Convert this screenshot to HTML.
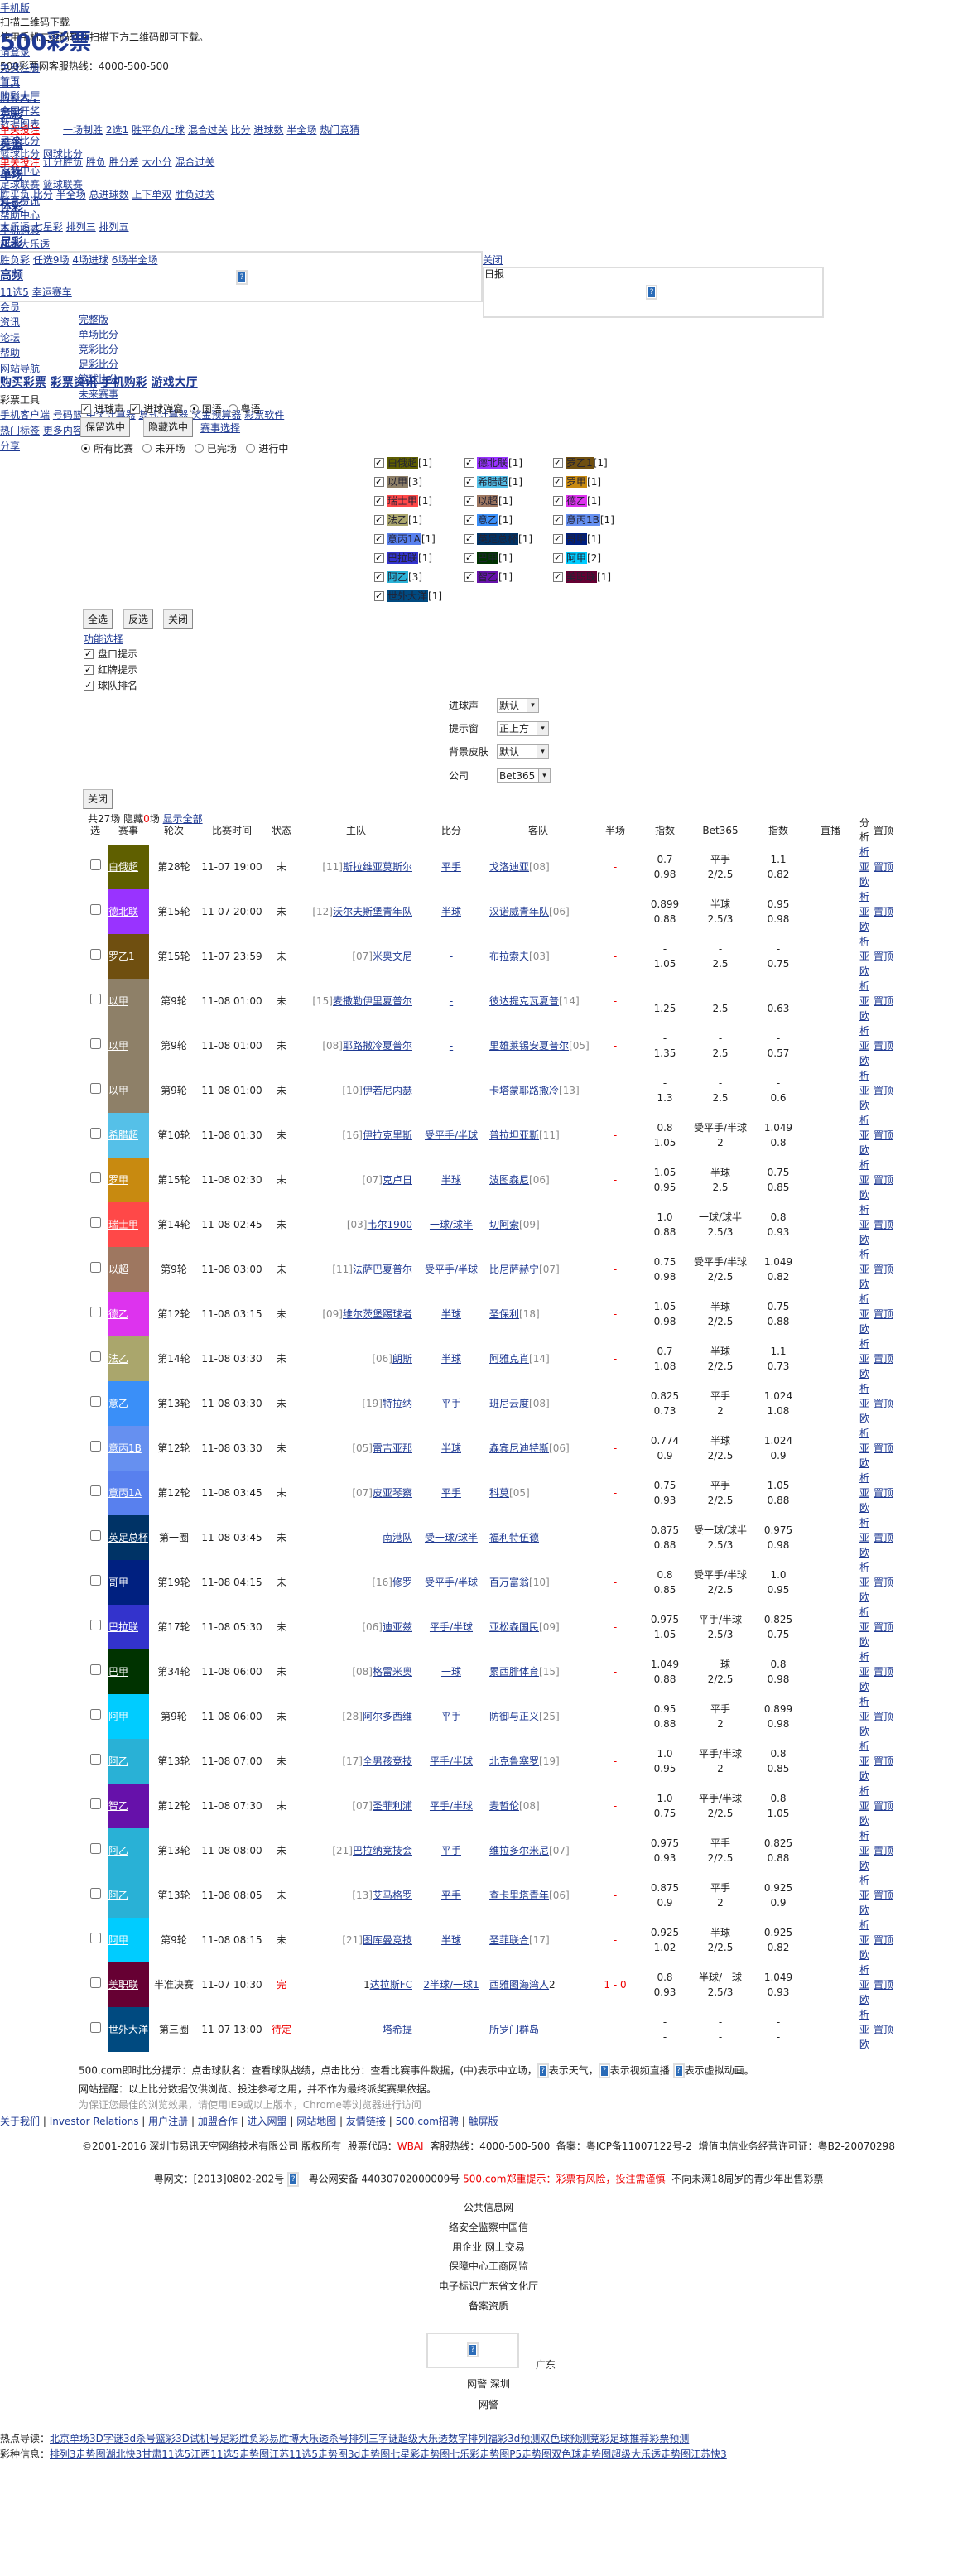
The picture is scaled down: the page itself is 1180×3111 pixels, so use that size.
<!DOCTYPE html>
<html><head><meta charset="utf-8">
<style>
*{box-sizing:border-box}
body{margin:0;width:1180px;height:3111px;position:relative;background:#fff;font:12px/16px "DejaVu Sans","Noto Sans CJK SC",sans-serif;color:#222;overflow:hidden}
a{color:#1f3a93;text-decoration:underline}
.a{position:absolute;white-space:nowrap;line-height:16px}
.red{color:#e00}
.b{font-weight:bold;font-size:14px}
.q{display:inline-block;width:14px;height:18px;border:2px solid #ddd;background:#fff;vertical-align:middle;position:relative}
.q:after{content:"?";position:absolute;left:1px;top:1px;width:8px;height:12px;background:#2b6cb8;color:#fff;font-size:9px;line-height:12px;text-align:center}
.btn{position:absolute;background:#efefef;border:1px solid #bbb;border-right-color:#888;border-bottom-color:#888;font-size:12px;line-height:22px;text-align:center;height:24px}
.sel{position:absolute;height:18px;border:1px solid #aaa;background:#fff;font-size:12px;line-height:16px;padding-left:2px}
.sel:after{content:"▾";position:absolute;right:0;top:0;width:13px;height:16px;background:#eee;border-left:1px solid #aaa;font-size:9px;text-align:center}
.cb{position:absolute;width:12px;height:12px;border:1px solid #777;background:#fff}
.cb.k:after{content:"✓";position:absolute;left:0;top:-3px;font-size:11px;color:#000;font-weight:bold}
.rd{display:inline-block;width:11px;height:11px;border:1px solid #888;border-radius:50%;vertical-align:-1px;margin-right:4px;position:relative}
.rd.k:after{content:"";position:absolute;left:3px;top:3px;width:3px;height:3px;border-radius:50%;background:#000}
.lg{padding:0 1px;color:#223}
table.m{position:absolute;left:100px;top:986px;border-collapse:collapse;table-layout:fixed;width:982px}
table.m tr{height:54px}
table.m td{padding:0;height:54px;text-align:center;white-space:nowrap;line-height:18px;vertical-align:middle;overflow:visible}
table.m tr.h{height:34px}
table.m tr.h td{height:34px}
table.m td:nth-child(14) a,table.m td:nth-child(14) span{display:block;height:18px;line-height:18px}
table.m tr.h td:nth-child(14) span{height:17px;line-height:17px}
table.m td.l{text-align:left;color:#fff;padding-left:1px}
table.m td.l a{color:#fff}
table.m td.r{text-align:right;padding-right:2px}
table.m td.g{text-align:left;padding-left:1px}
.k8{color:#888}
.ms{color:#e00}
</style></head><body>

<a class="a" style="left:0;top:2px">手机版</a>
<div class="a" style="left:0;top:19px">扫描二维码下载</div>
<div class="a" style="left:0;top:37px">使用手机二维码软件扫描下方二维码即可下载。</div>
<a class="a" style="left:0;top:36px;font-size:27px;line-height:32px;font-weight:bold;text-decoration:none">500彩票</a>
<a class="a" style="left:0;top:55px">请登录</a>
<div class="a" style="left:0;top:72px">500彩票网客服热线：4000-500-500</div>
<a class="a" style="left:0;top:74px">免费注册</a>
<a class="a" style="left:0;top:90px">首页</a><a class="a" style="left:0;top:92px">首页</a>
<a class="a" style="left:0;top:108px">购彩大厅</a><a class="a" style="left:0;top:110px">购彩大厅</a>
<a class="a" style="left:0;top:126px">全国开奖</a><a class="a b" style="left:0;top:130px">竞彩</a>
<a class="a" style="left:0;top:142px">数据图表</a>
<a class="a red" style="left:0;top:149px;color:#e00">单关投注</a>
<div class="a" style="left:76px;top:149px"><a>一场制胜</a> <a>2选1</a> <a>胜平负/让球</a> <a>混合过关</a> <a>比分</a> <a>进球数</a> <a>半全场</a> <a>热门竞猜</a></div>
<a class="a" style="left:0;top:162px">足球比分</a><a class="a b" style="left:0;top:167px">竞篮</a>
<div class="a" style="left:0;top:178px"><a>篮球比分</a> <a>网球比分</a></div>
<a class="a" style="left:0;top:188px;color:#e00">单关投注</a>
<div class="a" style="left:52px;top:188px"><a>让分胜负</a> <a>胜负</a> <a>胜分差</a> <a>大小分</a> <a>混合过关</a></div>
<a class="a" style="left:0;top:198px">指数中心</a><a class="a b" style="left:0;top:204px">单场</a>
<div class="a" style="left:0;top:215px"><a>足球联赛</a> <a>篮球联赛</a></div>
<div class="a" style="left:0;top:227px"><a>胜平负</a> <a>比分</a> <a>半全场</a> <a>总进球数</a> <a>上下单双</a> <a>胜负过关</a></div>
<a class="a" style="left:0;top:235px">彩票资讯</a><a class="a b" style="left:0;top:242px">体彩</a>
<a class="a" style="left:0;top:252px">帮助中心</a>
<div class="a" style="left:0;top:266px"><a>大乐透</a> <a>七星彩</a> <a>排列三</a> <a>排列五</a></div>
<a class="a" style="left:0;top:270px">手机购彩</a>
<a class="a" style="left:0;top:287px">超级大乐透</a><a class="a b" style="left:0;top:285px">足彩</a>

<div style="position:absolute;left:0;top:303px;width:583px;height:62px;border:2px solid #ddd;border-left:0"></div>
<div class="a" style="left:0;top:306px"><a>胜负彩</a> <a>任选9场</a> <a>4场进球</a> <a>6场半全场</a></div>
<a class="a b" style="left:0;top:325px">高频</a>
<span class="q" style="position:absolute;left:285px;top:326px"></span>
<div class="a" style="left:0;top:345px"><a>11选5</a> <a>幸运赛车</a></div>
<a class="a" style="left:583px;top:306px">关闭</a>
<div style="position:absolute;left:583px;top:322px;width:412px;height:62px;border:2px solid #ddd"></div>
<div class="a" style="left:585px;top:323px">日报</div>
<span class="q" style="position:absolute;left:780px;top:344px"></span>

<a class="a" style="left:0;top:363px">会员</a>
<a class="a" style="left:0;top:381px">资讯</a><a class="a" style="left:95px;top:378px">完整版</a>
<a class="a" style="left:0;top:400px">论坛</a><a class="a" style="left:95px;top:396px">单场比分</a>
<a class="a" style="left:0;top:418px">帮助</a><a class="a" style="left:95px;top:414px">竞彩比分</a>
<a class="a" style="left:0;top:437px">网站导航</a><a class="a" style="left:95px;top:432px">足彩比分</a>
<a class="a" style="left:95px;top:450px">篮球比分</a>
<div class="a b" style="left:0;top:454px"><a>购买彩票</a> <a>彩票资讯</a> <a>手机购彩</a> <a>游戏大厅</a></div>
<a class="a" style="left:95px;top:468px">未来赛事</a>
<div class="a" style="left:0;top:475px">彩票工具</div>
<div class="a" style="left:0;top:493px"><a>手机客户端</a> <a>号码篮</a> <a>中奖计算器</a> <a>复式计算器</a> <a>奖金预算器</a> <a>彩票软件</a></div>
<div class="a" style="left:98px;top:486px"><span class="cb k" style="position:relative;display:inline-block;vertical-align:-2px"></span> 进球声 &nbsp;<span class="cb k" style="position:relative;display:inline-block;vertical-align:-2px"></span> 进球弹窗 &nbsp;<span class="rd k"></span>国语 &nbsp;<span class="rd"></span>粤语</div>
<div class="a" style="left:0;top:512px"><a>热门标签</a> <a>更多内容</a></div>
<div class="btn" style="left:97px;top:504px;width:60px">保留选中</div>
<div class="btn" style="left:173px;top:504px;width:60px">隐藏选中</div>
<a class="a" style="left:242px;top:509px">赛事选择</a>
<a class="a" style="left:0;top:531px">分享</a>
<div class="a" style="left:98px;top:534px"><span class="rd k"></span>所有比赛 &nbsp; <span class="rd"></span>未开场 &nbsp; <span class="rd"></span>已完场 &nbsp; <span class="rd"></span>进行中</div>

<div style="position:absolute;left:0;top:0">
<span class="cb k" style="left:452px;top:553px"></span><div class="a" style="left:467px;top:551px"><span class="lg" style="background:#5f5f00">白俄超</span>[1]</div>
<span class="cb k" style="left:561px;top:553px"></span><div class="a" style="left:576px;top:551px"><span class="lg" style="background:#9933ff">德北联</span>[1]</div>
<span class="cb k" style="left:668px;top:553px"></span><div class="a" style="left:683px;top:551px"><span class="lg" style="background:#6f4f10">罗乙1</span>[1]</div>
<span class="cb k" style="left:452px;top:576px"></span><div class="a" style="left:467px;top:574px"><span class="lg" style="background:#8e8068">以甲</span>[3]</div>
<span class="cb k" style="left:561px;top:576px"></span><div class="a" style="left:576px;top:574px"><span class="lg" style="background:#55c0e8">希腊超</span>[1]</div>
<span class="cb k" style="left:668px;top:576px"></span><div class="a" style="left:683px;top:574px"><span class="lg" style="background:#c88a10">罗甲</span>[1]</div>
<span class="cb k" style="left:452px;top:599px"></span><div class="a" style="left:467px;top:597px"><span class="lg" style="background:#ff4848">瑞士甲</span>[1]</div>
<span class="cb k" style="left:561px;top:599px"></span><div class="a" style="left:576px;top:597px"><span class="lg" style="background:#9e7760">以超</span>[1]</div>
<span class="cb k" style="left:668px;top:599px"></span><div class="a" style="left:683px;top:597px"><span class="lg" style="background:#dd33ee">德乙</span>[1]</div>
<span class="cb k" style="left:452px;top:622px"></span><div class="a" style="left:467px;top:620px"><span class="lg" style="background:#aaa66c">法乙</span>[1]</div>
<span class="cb k" style="left:561px;top:622px"></span><div class="a" style="left:576px;top:620px"><span class="lg" style="background:#3a8ff8">意乙</span>[1]</div>
<span class="cb k" style="left:668px;top:622px"></span><div class="a" style="left:683px;top:620px"><span class="lg" style="background:#6690f0">意丙1B</span>[1]</div>
<span class="cb k" style="left:452px;top:645px"></span><div class="a" style="left:467px;top:643px"><span class="lg" style="background:#5880ee">意丙1A</span>[1]</div>
<span class="cb k" style="left:561px;top:645px"></span><div class="a" style="left:576px;top:643px"><span class="lg" style="background:#003366">英足总杯</span>[1]</div>
<span class="cb k" style="left:668px;top:645px"></span><div class="a" style="left:683px;top:643px"><span class="lg" style="background:#002080">哥甲</span>[1]</div>
<span class="cb k" style="left:452px;top:668px"></span><div class="a" style="left:467px;top:666px"><span class="lg" style="background:#3333cc">巴拉联</span>[1]</div>
<span class="cb k" style="left:561px;top:668px"></span><div class="a" style="left:576px;top:666px"><span class="lg" style="background:#003300">巴甲</span>[1]</div>
<span class="cb k" style="left:668px;top:668px"></span><div class="a" style="left:683px;top:666px"><span class="lg" style="background:#00ccff">阿甲</span>[2]</div>
<span class="cb k" style="left:452px;top:691px"></span><div class="a" style="left:467px;top:689px"><span class="lg" style="background:#29b1d6">阿乙</span>[3]</div>
<span class="cb k" style="left:561px;top:691px"></span><div class="a" style="left:576px;top:689px"><span class="lg" style="background:#6611aa">智乙</span>[1]</div>
<span class="cb k" style="left:668px;top:691px"></span><div class="a" style="left:683px;top:689px"><span class="lg" style="background:#660033">美职联</span>[1]</div>
<span class="cb k" style="left:452px;top:714px"></span><div class="a" style="left:467px;top:712px"><span class="lg" style="background:#004a80">世外大洋</span>[1]</div>
</div>

<div class="btn" style="left:100px;top:736px;width:36px">全选</div>
<div class="btn" style="left:149px;top:736px;width:36px">反选</div>
<div class="btn" style="left:197px;top:736px;width:36px">关闭</div>
<a class="a" style="left:101px;top:764px">功能选择</a>
<span class="cb k" style="left:101px;top:784px"></span><div class="a" style="left:118px;top:782px">盘口提示</div>
<span class="cb k" style="left:101px;top:803px"></span><div class="a" style="left:118px;top:801px">红牌提示</div>
<span class="cb k" style="left:101px;top:822px"></span><div class="a" style="left:118px;top:820px">球队排名</div>

<div class="a" style="left:542px;top:844px">进球声</div><div class="sel" style="left:600px;top:843px;width:51px">默认</div>
<div class="a" style="left:542px;top:872px">提示窗</div><div class="sel" style="left:600px;top:871px;width:63px">正上方</div>
<div class="a" style="left:542px;top:900px">背景皮肤</div><div class="sel" style="left:600px;top:899px;width:63px">默认</div>
<div class="a" style="left:542px;top:929px">公司</div><div class="sel" style="left:600px;top:928px;width:65px">Bet365</div>

<div class="btn" style="left:100px;top:953px;width:36px">关闭</div>
<div class="a" style="left:106px;top:981px">共27场 隐藏<span class="red">0</span>场 <a>显示全部</a></div>

<table class="m">
<colgroup><col style="width:30px"><col style="width:50px"><col style="width:60px"><col style="width:80px"><col style="width:40px"><col style="width:140px"><col style="width:90px"><col style="width:120px"><col style="width:66px"><col style="width:54px"><col style="width:80px"><col style="width:60px"><col style="width:66px"><col style="width:16px"><col style="width:30px"></colgroup>
<tr class="h"><td>选</td><td>赛事</td><td>轮次</td><td>比赛时间</td><td>状态</td><td>主队</td><td>比分</td><td>客队</td><td>半场</td><td>指数</td><td>Bet365</td><td>指数</td><td>直播</td><td><span>分</span><span>析</span></td><td>置顶</td></tr>
<tr><td><input type="checkbox" style="margin:0"></td><td class="l" style="background:#5f5f00"><a>白俄超</a></td><td>第28轮</td><td>11-07 19:00</td><td>未</td><td class="r"><span class="k8">[11]</span><a>斯拉维亚莫斯尔</a></td><td><a>平手</a></td><td class="g"><a>戈洛迪亚</a><span class="k8">[08]</span></td><td class="ms">-</td><td>0.7<br>0.98</td><td>平手<br>2/2.5</td><td>1.1<br>0.82</td><td></td><td><a>析</a><a>亚</a><a>欧</a></td><td><a>置顶</a></td></tr>
<tr><td><input type="checkbox" style="margin:0"></td><td class="l" style="background:#9933ff"><a>德北联</a></td><td>第15轮</td><td>11-07 20:00</td><td>未</td><td class="r"><span class="k8">[12]</span><a>沃尔夫斯堡青年队</a></td><td><a>半球</a></td><td class="g"><a>汉诺威青年队</a><span class="k8">[06]</span></td><td class="ms">-</td><td>0.899<br>0.88</td><td>半球<br>2.5/3</td><td>0.95<br>0.98</td><td></td><td><a>析</a><a>亚</a><a>欧</a></td><td><a>置顶</a></td></tr>
<tr><td><input type="checkbox" style="margin:0"></td><td class="l" style="background:#6f4f10"><a>罗乙1</a></td><td>第15轮</td><td>11-07 23:59</td><td>未</td><td class="r"><span class="k8">[07]</span><a>米奥文尼</a></td><td><a>-</a></td><td class="g"><a>布拉索夫</a><span class="k8">[03]</span></td><td class="ms">-</td><td>-<br>1.05</td><td>-<br>2.5</td><td>-<br>0.75</td><td></td><td><a>析</a><a>亚</a><a>欧</a></td><td><a>置顶</a></td></tr>
<tr><td><input type="checkbox" style="margin:0"></td><td class="l" style="background:#8e8068"><a>以甲</a></td><td>第9轮</td><td>11-08 01:00</td><td>未</td><td class="r"><span class="k8">[15]</span><a>麦撒勒伊里夏普尔</a></td><td><a>-</a></td><td class="g"><a>彼达提克瓦夏普</a><span class="k8">[14]</span></td><td class="ms">-</td><td>-<br>1.25</td><td>-<br>2.5</td><td>-<br>0.63</td><td></td><td><a>析</a><a>亚</a><a>欧</a></td><td><a>置顶</a></td></tr>
<tr><td><input type="checkbox" style="margin:0"></td><td class="l" style="background:#8e8068"><a>以甲</a></td><td>第9轮</td><td>11-08 01:00</td><td>未</td><td class="r"><span class="k8">[08]</span><a>耶路撒冷夏普尔</a></td><td><a>-</a></td><td class="g"><a>里雄莱锡安夏普尔</a><span class="k8">[05]</span></td><td class="ms">-</td><td>-<br>1.35</td><td>-<br>2.5</td><td>-<br>0.57</td><td></td><td><a>析</a><a>亚</a><a>欧</a></td><td><a>置顶</a></td></tr>
<tr><td><input type="checkbox" style="margin:0"></td><td class="l" style="background:#8e8068"><a>以甲</a></td><td>第9轮</td><td>11-08 01:00</td><td>未</td><td class="r"><span class="k8">[10]</span><a>伊若尼内瑟</a></td><td><a>-</a></td><td class="g"><a>卡塔蒙耶路撒冷</a><span class="k8">[13]</span></td><td class="ms">-</td><td>-<br>1.3</td><td>-<br>2.5</td><td>-<br>0.6</td><td></td><td><a>析</a><a>亚</a><a>欧</a></td><td><a>置顶</a></td></tr>
<tr><td><input type="checkbox" style="margin:0"></td><td class="l" style="background:#55c0e8"><a>希腊超</a></td><td>第10轮</td><td>11-08 01:30</td><td>未</td><td class="r"><span class="k8">[16]</span><a>伊拉克里斯</a></td><td><a>受平手/半球</a></td><td class="g"><a>普拉坦亚斯</a><span class="k8">[11]</span></td><td class="ms">-</td><td>0.8<br>1.05</td><td>受平手/半球<br>2</td><td>1.049<br>0.8</td><td></td><td><a>析</a><a>亚</a><a>欧</a></td><td><a>置顶</a></td></tr>
<tr><td><input type="checkbox" style="margin:0"></td><td class="l" style="background:#c88a10"><a>罗甲</a></td><td>第15轮</td><td>11-08 02:30</td><td>未</td><td class="r"><span class="k8">[07]</span><a>克卢日</a></td><td><a>半球</a></td><td class="g"><a>波图森尼</a><span class="k8">[06]</span></td><td class="ms">-</td><td>1.05<br>0.95</td><td>半球<br>2.5</td><td>0.75<br>0.85</td><td></td><td><a>析</a><a>亚</a><a>欧</a></td><td><a>置顶</a></td></tr>
<tr><td><input type="checkbox" style="margin:0"></td><td class="l" style="background:#ff4848"><a>瑞士甲</a></td><td>第14轮</td><td>11-08 02:45</td><td>未</td><td class="r"><span class="k8">[03]</span><a>韦尔1900</a></td><td><a>一球/球半</a></td><td class="g"><a>切阿索</a><span class="k8">[09]</span></td><td class="ms">-</td><td>1.0<br>0.88</td><td>一球/球半<br>2.5/3</td><td>0.8<br>0.93</td><td></td><td><a>析</a><a>亚</a><a>欧</a></td><td><a>置顶</a></td></tr>
<tr><td><input type="checkbox" style="margin:0"></td><td class="l" style="background:#9e7760"><a>以超</a></td><td>第9轮</td><td>11-08 03:00</td><td>未</td><td class="r"><span class="k8">[11]</span><a>法萨巴夏普尔</a></td><td><a>受平手/半球</a></td><td class="g"><a>比尼萨赫宁</a><span class="k8">[07]</span></td><td class="ms">-</td><td>0.75<br>0.98</td><td>受平手/半球<br>2/2.5</td><td>1.049<br>0.82</td><td></td><td><a>析</a><a>亚</a><a>欧</a></td><td><a>置顶</a></td></tr>
<tr><td><input type="checkbox" style="margin:0"></td><td class="l" style="background:#dd33ee"><a>德乙</a></td><td>第12轮</td><td>11-08 03:15</td><td>未</td><td class="r"><span class="k8">[09]</span><a>维尔茨堡踢球者</a></td><td><a>半球</a></td><td class="g"><a>圣保利</a><span class="k8">[18]</span></td><td class="ms">-</td><td>1.05<br>0.98</td><td>半球<br>2/2.5</td><td>0.75<br>0.88</td><td></td><td><a>析</a><a>亚</a><a>欧</a></td><td><a>置顶</a></td></tr>
<tr><td><input type="checkbox" style="margin:0"></td><td class="l" style="background:#aaa66c"><a>法乙</a></td><td>第14轮</td><td>11-08 03:30</td><td>未</td><td class="r"><span class="k8">[06]</span><a>朗斯</a></td><td><a>半球</a></td><td class="g"><a>阿雅克肖</a><span class="k8">[14]</span></td><td class="ms">-</td><td>0.7<br>1.08</td><td>半球<br>2/2.5</td><td>1.1<br>0.73</td><td></td><td><a>析</a><a>亚</a><a>欧</a></td><td><a>置顶</a></td></tr>
<tr><td><input type="checkbox" style="margin:0"></td><td class="l" style="background:#3a8ff8"><a>意乙</a></td><td>第13轮</td><td>11-08 03:30</td><td>未</td><td class="r"><span class="k8">[19]</span><a>特拉纳</a></td><td><a>平手</a></td><td class="g"><a>班尼云度</a><span class="k8">[08]</span></td><td class="ms">-</td><td>0.825<br>0.73</td><td>平手<br>2</td><td>1.024<br>1.08</td><td></td><td><a>析</a><a>亚</a><a>欧</a></td><td><a>置顶</a></td></tr>
<tr><td><input type="checkbox" style="margin:0"></td><td class="l" style="background:#6690f0"><a>意丙1B</a></td><td>第12轮</td><td>11-08 03:30</td><td>未</td><td class="r"><span class="k8">[05]</span><a>雷吉亚那</a></td><td><a>半球</a></td><td class="g"><a>森宾尼迪特斯</a><span class="k8">[06]</span></td><td class="ms">-</td><td>0.774<br>0.9</td><td>半球<br>2/2.5</td><td>1.024<br>0.9</td><td></td><td><a>析</a><a>亚</a><a>欧</a></td><td><a>置顶</a></td></tr>
<tr><td><input type="checkbox" style="margin:0"></td><td class="l" style="background:#5880ee"><a>意丙1A</a></td><td>第12轮</td><td>11-08 03:45</td><td>未</td><td class="r"><span class="k8">[07]</span><a>皮亚琴察</a></td><td><a>平手</a></td><td class="g"><a>科莫</a><span class="k8">[05]</span></td><td class="ms">-</td><td>0.75<br>0.93</td><td>平手<br>2/2.5</td><td>1.05<br>0.88</td><td></td><td><a>析</a><a>亚</a><a>欧</a></td><td><a>置顶</a></td></tr>
<tr><td><input type="checkbox" style="margin:0"></td><td class="l" style="background:#003366"><a>英足总杯</a></td><td>第一圈</td><td>11-08 03:45</td><td>未</td><td class="r"><a>南港队</a></td><td><a>受一球/球半</a></td><td class="g"><a>福利特伍德</a></td><td class="ms">-</td><td>0.875<br>0.88</td><td>受一球/球半<br>2.5/3</td><td>0.975<br>0.98</td><td></td><td><a>析</a><a>亚</a><a>欧</a></td><td><a>置顶</a></td></tr>
<tr><td><input type="checkbox" style="margin:0"></td><td class="l" style="background:#002080"><a>哥甲</a></td><td>第19轮</td><td>11-08 04:15</td><td>未</td><td class="r"><span class="k8">[16]</span><a>修罗</a></td><td><a>受平手/半球</a></td><td class="g"><a>百万富翁</a><span class="k8">[10]</span></td><td class="ms">-</td><td>0.8<br>0.85</td><td>受平手/半球<br>2/2.5</td><td>1.0<br>0.95</td><td></td><td><a>析</a><a>亚</a><a>欧</a></td><td><a>置顶</a></td></tr>
<tr><td><input type="checkbox" style="margin:0"></td><td class="l" style="background:#3333cc"><a>巴拉联</a></td><td>第17轮</td><td>11-08 05:30</td><td>未</td><td class="r"><span class="k8">[06]</span><a>迪亚兹</a></td><td><a>平手/半球</a></td><td class="g"><a>亚松森国民</a><span class="k8">[09]</span></td><td class="ms">-</td><td>0.975<br>1.05</td><td>平手/半球<br>2.5/3</td><td>0.825<br>0.75</td><td></td><td><a>析</a><a>亚</a><a>欧</a></td><td><a>置顶</a></td></tr>
<tr><td><input type="checkbox" style="margin:0"></td><td class="l" style="background:#003300"><a>巴甲</a></td><td>第34轮</td><td>11-08 06:00</td><td>未</td><td class="r"><span class="k8">[08]</span><a>格雷米奥</a></td><td><a>一球</a></td><td class="g"><a>累西腓体育</a><span class="k8">[15]</span></td><td class="ms">-</td><td>1.049<br>0.88</td><td>一球<br>2/2.5</td><td>0.8<br>0.98</td><td></td><td><a>析</a><a>亚</a><a>欧</a></td><td><a>置顶</a></td></tr>
<tr><td><input type="checkbox" style="margin:0"></td><td class="l" style="background:#00ccff"><a>阿甲</a></td><td>第9轮</td><td>11-08 06:00</td><td>未</td><td class="r"><span class="k8">[28]</span><a>阿尔多西维</a></td><td><a>平手</a></td><td class="g"><a>防御与正义</a><span class="k8">[25]</span></td><td class="ms">-</td><td>0.95<br>0.88</td><td>平手<br>2</td><td>0.899<br>0.98</td><td></td><td><a>析</a><a>亚</a><a>欧</a></td><td><a>置顶</a></td></tr>
<tr><td><input type="checkbox" style="margin:0"></td><td class="l" style="background:#29b1d6"><a>阿乙</a></td><td>第13轮</td><td>11-08 07:00</td><td>未</td><td class="r"><span class="k8">[17]</span><a>全男孩竞技</a></td><td><a>平手/半球</a></td><td class="g"><a>北克鲁塞罗</a><span class="k8">[19]</span></td><td class="ms">-</td><td>1.0<br>0.95</td><td>平手/半球<br>2</td><td>0.8<br>0.85</td><td></td><td><a>析</a><a>亚</a><a>欧</a></td><td><a>置顶</a></td></tr>
<tr><td><input type="checkbox" style="margin:0"></td><td class="l" style="background:#6611aa"><a>智乙</a></td><td>第12轮</td><td>11-08 07:30</td><td>未</td><td class="r"><span class="k8">[07]</span><a>圣菲利浦</a></td><td><a>平手/半球</a></td><td class="g"><a>麦哲伦</a><span class="k8">[08]</span></td><td class="ms">-</td><td>1.0<br>0.75</td><td>平手/半球<br>2/2.5</td><td>0.8<br>1.05</td><td></td><td><a>析</a><a>亚</a><a>欧</a></td><td><a>置顶</a></td></tr>
<tr><td><input type="checkbox" style="margin:0"></td><td class="l" style="background:#29b1d6"><a>阿乙</a></td><td>第13轮</td><td>11-08 08:00</td><td>未</td><td class="r"><span class="k8">[21]</span><a>巴拉纳竞技会</a></td><td><a>平手</a></td><td class="g"><a>维拉多尔米尼</a><span class="k8">[07]</span></td><td class="ms">-</td><td>0.975<br>0.93</td><td>平手<br>2/2.5</td><td>0.825<br>0.88</td><td></td><td><a>析</a><a>亚</a><a>欧</a></td><td><a>置顶</a></td></tr>
<tr><td><input type="checkbox" style="margin:0"></td><td class="l" style="background:#29b1d6"><a>阿乙</a></td><td>第13轮</td><td>11-08 08:05</td><td>未</td><td class="r"><span class="k8">[13]</span><a>艾马格罗</a></td><td><a>平手</a></td><td class="g"><a>查卡里塔青年</a><span class="k8">[06]</span></td><td class="ms">-</td><td>0.875<br>0.9</td><td>平手<br>2</td><td>0.925<br>0.9</td><td></td><td><a>析</a><a>亚</a><a>欧</a></td><td><a>置顶</a></td></tr>
<tr><td><input type="checkbox" style="margin:0"></td><td class="l" style="background:#00ccff"><a>阿甲</a></td><td>第9轮</td><td>11-08 08:15</td><td>未</td><td class="r"><span class="k8">[21]</span><a>图库曼竞技</a></td><td><a>半球</a></td><td class="g"><a>圣菲联合</a><span class="k8">[17]</span></td><td class="ms">-</td><td>0.925<br>1.02</td><td>半球<br>2/2.5</td><td>0.925<br>0.82</td><td></td><td><a>析</a><a>亚</a><a>欧</a></td><td><a>置顶</a></td></tr>
<tr><td><input type="checkbox" style="margin:0"></td><td class="l" style="background:#660033"><a>美职联</a></td><td>半准决赛</td><td>11-07 10:30</td><td class="red">完</td><td class="r">1<a>达拉斯FC</a></td><td><a>2半球/一球1</a></td><td class="g"><a>西雅图海湾人</a>2</td><td class="ms">1 - 0</td><td>0.8<br>0.93</td><td>半球/一球<br>2.5/3</td><td>1.049<br>0.93</td><td></td><td><a>析</a><a>亚</a><a>欧</a></td><td><a>置顶</a></td></tr>
<tr><td><input type="checkbox" style="margin:0"></td><td class="l" style="background:#004a80"><a>世外大洋</a></td><td>第三圈</td><td>11-07 13:00</td><td class="red">待定</td><td class="r"><a>塔希提</a></td><td><a>-</a></td><td class="g"><a>所罗门群岛</a></td><td class="ms">-</td><td>-<br>-</td><td>-<br>-</td><td>-<br>-</td><td></td><td><a>析</a><a>亚</a><a>欧</a></td><td><a>置顶</a></td></tr>
</table>

<div class="a" style="left:95px;top:2492px">500.com即时比分提示：点击球队名：查看球队战绩，点击比分：查看比赛事件数据，(中)表示中立场，<span class="q"></span>表示天气，<span class="q"></span>表示视频直播 <span class="q"></span>表示虚拟动画。</div>
<div class="a" style="left:95px;top:2515px">网站提醒：以上比分数据仅供浏览、投注参考之用，并不作为最终派奖赛果依据。</div>
<div class="a" style="left:95px;top:2534px;color:#999">为保证您最佳的浏览效果，请使用IE9或以上版本，Chrome等浏览器进行访问</div>
<div class="a" style="left:0;top:2554px"><a>关于我们</a> | <a>Investor Relations</a> | <a>用户注册</a> | <a>加盟合作</a> | <a>进入网盟</a> | <a>网站地图</a> | <a>友情链接</a> | <a>500.com招聘</a> | <a>触屏版</a></div>
<div class="a" style="left:0;width:1180px;text-align:center;top:2584px">©2001-2016 深圳市易讯天空网络技术有限公司 版权所有&nbsp; 股票代码：<span class="red">WBAI</span>&nbsp; 客服热线：4000-500-500&nbsp; 备案：粤ICP备11007122号-2&nbsp; 增值电信业务经营许可证：粤B2-20070298</div>
<div class="a" style="left:0;width:1180px;text-align:center;top:2623px">粤网文：[2013]0802-202号 <span class="q"></span>&nbsp;&nbsp; 粤公网安备 44030702000009号 <span class="red">500.com郑重提示：彩票有风险，投注需谨慎</span>&nbsp; 不向未满18周岁的青少年出售彩票</div>
<div class="a" style="left:0;width:1180px;text-align:center;top:2658px">公共信息网</div>
<div class="a" style="left:0;width:1180px;text-align:center;top:2682px">络安全监察中国信</div>
<div class="a" style="left:0;width:1180px;text-align:center;top:2706px">用企业 网上交易</div>
<div class="a" style="left:0;width:1180px;text-align:center;top:2729px">保障中心工商网监</div>
<div class="a" style="left:0;width:1180px;text-align:center;top:2753px">电子标识广东省文化厅</div>
<div class="a" style="left:0;width:1180px;text-align:center;top:2777px">备案资质</div>
<div style="position:absolute;left:515px;top:2817px;width:112px;height:43px;border:2px solid #ddd"></div>
<span class="q" style="position:absolute;left:564px;top:2829px"></span>
<div class="a" style="left:647px;top:2848px">广东</div>
<div class="a" style="left:0;width:1180px;text-align:center;top:2871px">网警 深圳</div>
<div class="a" style="left:0;width:1180px;text-align:center;top:2896px">网警</div>
<div class="a" style="left:0;top:2937px">热点导读：<a>北京单场3D字谜3d杀号篮彩3D试机号足彩胜负彩易胜博大乐透杀号排列三字谜超级大乐透数字排列福彩3d预测双色球预测竞彩足球推荐彩票预测</a></div>
<div class="a" style="left:0;top:2956px">彩种信息：<a>排列3走势图湖北快3甘肃11选5江西11选5走势图江苏11选5走势图3d走势图七星彩走势图七乐彩走势图P5走势图双色球走势图超级大乐透走势图江苏快3</a></div>
</body></html>
